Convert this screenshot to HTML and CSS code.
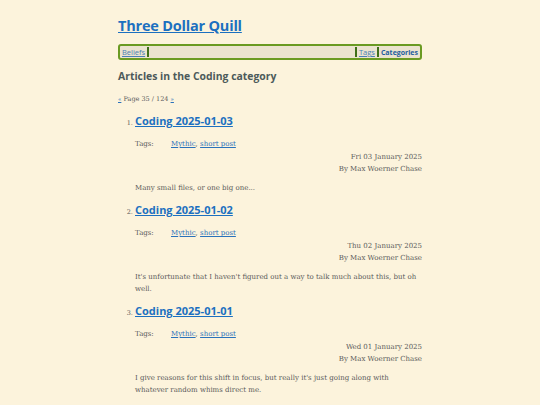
FILE: index.html
```html
<!DOCTYPE html>
<html>
<head>
<meta charset="utf-8">
<link rel="stylesheet" href="styles.css">
</head>
<body>
<div class="page">
  <h1 class="site-title"><a href="#">Three Dollar Quill</a></h1>
  <nav class="nav">
    <div class="nav-left"><a href="#">Beliefs</a><span class="sep"></span></div>
    <div class="nav-right"><span class="sep"></span><a href="#">Tags</a><span class="sep"></span><a href="#" class="current">Categories</a></div>
  </nav>
  <h2 class="cat-title">Articles in the Coding category</h2>
  <p class="pager"><a href="#">«</a> Page 35 / 124 <a href="#">»</a></p>
  <ol class="articles">
    <li class="article">
      <h3 class="a-title"><a href="#">Coding 2025-01-03</a></h3>
      <div class="tags"><span class="tags-label">Tags:</span><span><a href="#">Mythic</a>, <a href="#">short post</a></span></div>
      <div class="meta"><div>Fri 03 January 2025</div><div>By Max Woerner Chase</div></div>
      <p class="summary">Many small files, or one big one...</p>
    </li>
    <li class="article">
      <h3 class="a-title"><a href="#">Coding 2025-01-02</a></h3>
      <div class="tags"><span class="tags-label">Tags:</span><span><a href="#">Mythic</a>, <a href="#">short post</a></span></div>
      <div class="meta"><div>Thu 02 January 2025</div><div>By Max Woerner Chase</div></div>
      <p class="summary">It's unfortunate that I haven't figured out a way to talk much about this, but oh well.</p>
    </li>
    <li class="article">
      <h3 class="a-title"><a href="#">Coding 2025-01-01</a></h3>
      <div class="tags"><span class="tags-label">Tags:</span><span><a href="#">Mythic</a>, <a href="#">short post</a></span></div>
      <div class="meta"><div>Wed 01 January 2025</div><div>By Max Woerner Chase</div></div>
      <p class="summary">I give reasons for this shift in focus, but really it's just going along with whatever random whims direct me.</p>
    </li>
  </ol>
</div>
</body>
</html>
```
FILE: styles.css
```css
html, body {
  margin: 0;
  padding: 0;
  background: #fcf3dc;
}
body {
  font-family: "DejaVu Serif", "Liberation Serif", serif;
  color: #5a5a5a;
  font-size: 7px;
}
a { color: #2a72bb; }
.page {
  width: 304px;
  margin: 0 auto;
  padding-top: 14px;
}
.site-title {
  margin: 0;
  font-family: "Open Sans", sans-serif;
  font-size: 14.5px;
  font-weight: 700;
  line-height: 24px;
  letter-spacing: -0.2px;
}
.site-title a { color: #1c70c0; }
.nav {
  margin-top: 6px;
  display: flex;
  justify-content: space-between;
  align-items: center;
  height: 12px;
  border: 2px solid #6a9a22;
  border-radius: 3px;
  background: #ebe3cf;
  padding: 0 2px;
  font-family: "Open Sans", sans-serif;
  font-size: 7.5px;
}
.nav-left, .nav-right {
  display: flex;
  align-items: center;
  gap: 2px;
}
.sep {
  display: inline-block;
  width: 2px;
  height: 10px;
  background: #3f6e18;
}
.nav a { color: #4a7fb5; }
.nav a.current { font-weight: 700; color: #1e5d9e; text-decoration: none; font-size: 7px; }
.cat-title {
  margin: 8px 0 0;
  font-family: "Open Sans", sans-serif;
  font-size: 10.4px;
  font-weight: 700;
  color: #4c5a5a;
  line-height: 16px;
}
.pager {
  margin: 10px 0 0;
  font-size: 6.5px;
  line-height: 10px;
}
.pager a { font-size: 5.5px; }
.articles {
  margin: 9px 0 0;
  padding-left: 17px;
}
.article { font-size: 6.5px; }
.a-title {
  margin: 0;
  font-family: "Open Sans", sans-serif;
  font-size: 11px;
  font-weight: 700;
  line-height: 16px;
  display: inline;
}
.a-title a { color: #1c70c0; }
.tags {
  margin-top: 9px;
  display: flex;
  font-size: 7px;
  line-height: 12px;
}
.tags-label { width: 36px; }
.meta {
  text-align: right;
  margin-top: 1px;
  font-size: 7px;
  line-height: 12px;
}
.summary {
  margin: 7px 0 8px;
  font-size: 7px;
  line-height: 12px;
}
```
